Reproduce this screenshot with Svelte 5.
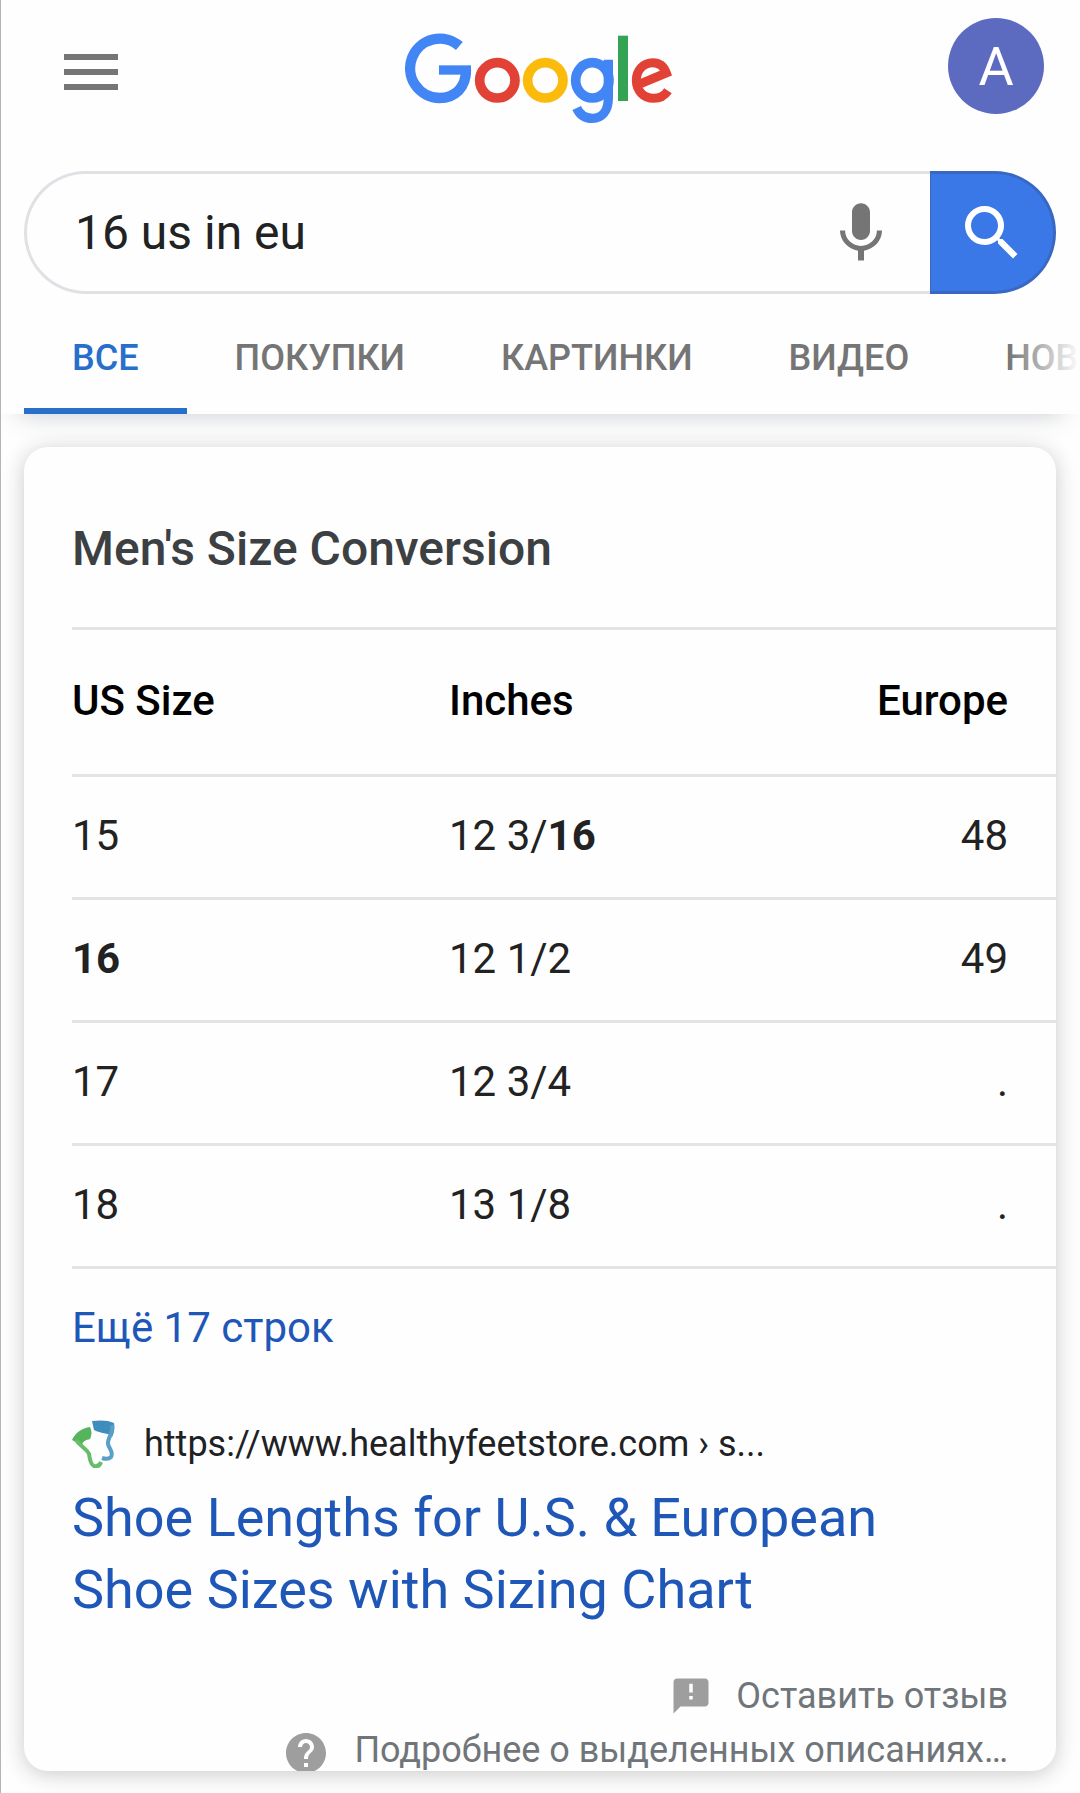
<script lang="ts">
  let query = "16 us in eu";
  let activeTab = "ВСЕ";

  const tabs = ["ВСЕ", "ПОКУПКИ", "КАРТИНКИ", "ВИДЕО", "НОВОСТИ"];

  // parts wrapped in * are highlighted matches
  const rows = [
    ["15", "12 3/*16*", "48"],
    ["*16*", "12 1/2", "49"],
    ["17", "12 3/4", "."],
    ["18", "13 1/8", "."]
  ];
</script>

<div class="page">
  <header>
    <div class="top-row">
      <button class="menu-button" aria-label="Меню">
        <svg viewBox="0 0 24 24" fill="currentColor">
          <path d="M3 18h18v-2H3v2zm0-5h18v-2H3v2zm0-7v2h18V6H3z" />
        </svg>
      </button>
      <a class="logo" href="#home" aria-label="Google">
        <svg viewBox="67 70 825 270" fill="none" stroke-width="29">
          <path
            d="M236 109A89 89 0 1 0 176 265C225 265 256 232 256 181"
            stroke="#4285f4"
            stroke-width="31"
          />
          <rect x="175" y="167" width="96" height="28" fill="#4285f4" />
          <circle cx="350" cy="212" r="53" stroke="#e24236" />
          <circle cx="494" cy="212" r="53" stroke="#fabb0c" />
          <ellipse cx="635" cy="212" rx="50" ry="53" stroke="#4285f4" />
          <path
            d="M683 150V264C683 305 663 326 635 326C611 326 596 313 588 295"
            stroke="#4285f4"
            stroke-width="28"
          />
          <rect x="712" y="78" width="30" height="196" fill="#34a353" />
          <path
            d="M862 243C852 258 837 266 819 266C788 266 767 242 767 212C767 182 788 159 816 159C836 159 850 170 857 190L780 222"
            stroke="#e24236"
            stroke-width="27"
          />
        </svg>
      </a>
      <button class="avatar" aria-label="Аккаунт">A</button>
    </div>

    <form class="search" on:submit|preventDefault>
      <div class="search-box">
        <input type="text" aria-label="Поиск" bind:value={query} />
        <button type="button" class="mic-button" aria-label="Голосовой поиск">
          <svg viewBox="0 0 24 24" fill="currentColor">
            <path
              d="M12 14.3c1.66 0 3-1.34 3-3V5.1c0-1.66-1.34-3-3-3s-3 1.34-3 3v6.2c0 1.66 1.34 3 3 3zm5.3-3.1c0 3-2.54 5.1-5.3 5.1s-5.3-2.1-5.3-5.1H5c0 3.41 2.72 6.23 6 6.72v3.28h2v-3.28c3.28-.48 6-3.3 6-6.72h-1.7z"
            />
          </svg>
        </button>
      </div>
      <button type="submit" class="search-button" aria-label="Найти">
        <svg viewBox="0 0 24 24" fill="currentColor">
          <path
            d="M15.5 14h-.79l-.28-.27A6.471 6.471 0 0 0 16 9.5 6.5 6.5 0 1 0 9.5 16c1.61 0 3.09-.59 4.23-1.57l.27.28v.79l5 4.99L20.49 19l-4.99-5zm-6 0C7.01 14 5 11.99 5 9.5S7.01 5 9.5 5 14 7.01 14 9.5 11.99 14 9.5 14z"
          />
        </svg>
      </button>
    </form>

    <nav>
      {#each tabs as tab}
        <button
          class="tab {tab === activeTab ? 'active' : ''}"
          on:click={() => (activeTab = tab)}
        >
          {tab}
        </button>
      {/each}
    </nav>
  </header>

  <main class="card">
    <h2>Men's Size Conversion</h2>
    <table>
      <thead>
        <tr>
          <th>US Size</th>
          <th>Inches</th>
          <th>Europe</th>
        </tr>
      </thead>
      <tbody>
        {#each rows as row}
          <tr>
            {#each row as cell}
              <td>
                {#each cell.split("*") as part, i}{#if i % 2}<b>{part}</b>{:else}{part}{/if}{/each}
              </td>
            {/each}
          </tr>
        {/each}
      </tbody>
    </table>
    <a class="more" href="#more">Ещё 17 строк</a>

    <a class="result" href="#result">
      <span class="source">
        <svg class="favicon" viewBox="0 0 48 48" fill="none">
          <path
            d="M0 20C3 13 10 8 18 7C20 11 20 15 18 19C14 20 11 21 10 25Z"
            fill="#55b45c"
          />
          <path
            d="M4 20C8 26 15 29 17 34C18 39 18 44 22 46C26 47 28 45 29 42"
            stroke="#67bd6b"
            stroke-width="4"
          />
          <path
            d="M20 1C28 0 36 0 42 3C43 8 42 14 40 17C36 12 29 14 22 10Z"
            fill="#3f8dbc"
          />
          <path
            d="M40 5C42 13 35 18 36 24C37 29 42 32 39 37C37 39 33 39 30 38"
            stroke="#5a9fc8"
            stroke-width="4"
          />
        </svg>
        <span>https://www.healthyfeetstore.com › s...</span>
      </span>
      <span class="result-title">
        Shoe Lengths for U.S. &amp; European Shoe Sizes with Sizing Chart
      </span>
    </a>

    <footer>
      <a href="#feedback">
        <svg class="feedback-icon" viewBox="0 0 24 24" fill="currentColor">
          <path
            d="M20 2H4c-1.1 0-1.99.9-1.99 2L2 22l4-4h14c1.1 0 2-.9 2-2V4c0-1.1-.9-2-2-2zm-7 12h-2v-2h2v2zm0-4h-2V5h2v5z"
          />
        </svg>
        Оставить отзыв
      </a>
      <a href="#about">
        <svg class="help-icon" viewBox="0 0 24 24" fill="currentColor">
          <path
            d="M12 2C6.48 2 2 6.48 2 12s4.48 10 10 10 10-4.48 10-10S17.52 2 12 2zm1 17h-2v-2h2v2zm2.07-7.75l-.9.92C13.45 12.9 13 13.5 13 15h-2v-.5c0-1.1.45-2.1 1.17-2.83l1.24-1.26c.37-.36.59-.86.59-1.41 0-1.1-.9-2-2-2s-2 .9-2 2H8c0-2.21 1.79-4 4-4s4 1.79 4 4c0 .88-.36 1.68-.93 2.25z"
          />
        </svg>
        Подробнее о выделенных описаниях…
      </a>
    </footer>
  </main>
</div>

<style>
  :global(body) {
    background: #fefefe;
    font-family: Roboto, "Liberation Sans", sans-serif;
  }

  .page {
    min-height: 100vh;
    box-sizing: border-box;
    border-left: 1px solid #b4b4b4;
    overflow: hidden;
    color: #202124;
  }

  button {
    padding: 0;
    border: none;
    background: none;
    font-family: inherit;
    cursor: pointer;
  }

  a {
    color: #1f57b8;
    text-decoration: none;
  }

  svg {
    display: block;
    flex: none;
  }

  header {
    background: #fefefe;
    box-shadow: 0 18px 24px -18px rgba(60, 70, 85, 0.28);
  }

  .top-row {
    display: grid;
    grid-template-columns: 1fr auto 1fr;
    align-items: start;
    height: 171px;
    padding: 0 36px;
    box-sizing: border-box;
  }

  .menu-button {
    margin: 36px 0 0 18px;
    justify-self: start;
    color: #757575;
  }

  .menu-button svg,
  .mic-button svg,
  .search-button svg {
    width: 72px;
    height: 72px;
  }

  .logo {
    margin-top: 33px;
  }

  .logo svg {
    width: 275px;
    height: 90px;
  }

  .avatar {
    margin-top: 18px;
    justify-self: end;
    width: 96px;
    height: 96px;
    border-radius: 50%;
    background: #5c6bc0;
    color: #fff;
    font-size: 54px;
  }

  .search {
    display: flex;
    height: 123px;
    margin: 0 24px 0 23px;
  }

  .search-box {
    flex: 1;
    min-width: 0;
    display: flex;
    align-items: center;
    padding: 0 33px 0 48px;
    border: 3px solid #dfe1e5;
    border-right: none;
    border-radius: 62px 0 0 62px;
  }

  .search-box input {
    flex: 1;
    min-width: 0;
    padding: 0;
    border: none;
    outline: none;
    background: none;
    font-family: inherit;
    font-size: 48px;
    color: #222;
  }

  .mic-button {
    color: #757575;
  }

  .search-button {
    display: flex;
    align-items: center;
    justify-content: center;
    width: 126px;
    border: 3px solid #3968c4;
    border-left-width: 1px;
    border-radius: 0 62px 62px 0;
    background: #3b78e7;
    color: #fff;
  }

  nav {
    position: relative;
    display: flex;
    padding-left: 23px;
    overflow: hidden;
  }

  nav::after {
    content: "";
    position: absolute;
    top: 0;
    right: 0;
    bottom: 0;
    width: 72px;
    background: linear-gradient(to right, rgba(254, 254, 254, 0), #fefefe);
    pointer-events: none;
  }

  .tab {
    flex: none;
    height: 120px;
    padding: 14px 48px 0;
    border-bottom: 6px solid transparent;
    font-size: 36px;
    font-weight: 500;
    color: #757575;
  }

  .tab.active {
    color: #286ecb;
    border-color: #286ecb;
  }

  .card {
    margin: 33px 24px 22px 23px;
    padding-left: 48px;
    border-radius: 24px;
    background: #fefefe;
    box-shadow: 0 3px 21px rgba(32, 33, 36, 0.24);
    overflow: hidden;
  }

  h2 {
    margin: 0;
    padding: 72px 0 48px;
    border-bottom: 3px solid #e4e4e4;
    font-size: 48px;
    font-weight: 500;
    line-height: 60px;
    color: #3c4043;
  }

  table {
    width: 100%;
    table-layout: fixed;
    border-collapse: separate;
    border-spacing: 0;
    font-size: 42px;
    line-height: 48px;
    color: #222;
  }

  th,
  td {
    padding: 35px 0 37px;
    border-bottom: 3px solid #e4e4e4;
    text-align: left;
  }

  th {
    padding: 47px 0 49px;
    font-weight: 500;
    color: #000;
  }

  th:first-child {
    width: 377px;
  }

  th:last-child,
  td:last-child {
    padding-right: 48px;
    text-align: right;
  }

  .more {
    display: block;
    font-size: 42px;
    line-height: 118px;
  }

  .result {
    display: block;
    margin-top: 33px;
  }

  .source {
    display: flex;
    align-items: center;
    gap: 24px;
    font-size: 36px;
    line-height: 48px;
    color: #202124;
  }

  .favicon {
    width: 48px;
    height: 48px;
  }

  .result-title {
    display: block;
    margin-top: 14px;
    padding-right: 48px;
    font-size: 54px;
    line-height: 72px;
  }

  footer {
    display: flex;
    flex-direction: column;
    align-items: flex-end;
    margin: 43px 48px -6px 0;
  }

  footer a {
    display: flex;
    align-items: center;
    gap: 24px;
    font-size: 36px;
    line-height: 54px;
    color: #70757a;
    white-space: nowrap;
  }

  footer svg {
    color: #9e9e9e;
  }

  .feedback-icon {
    width: 42px;
    height: 42px;
  }

  .help-icon {
    align-self: flex-end;
    width: 48px;
    height: 48px;
  }
</style>
